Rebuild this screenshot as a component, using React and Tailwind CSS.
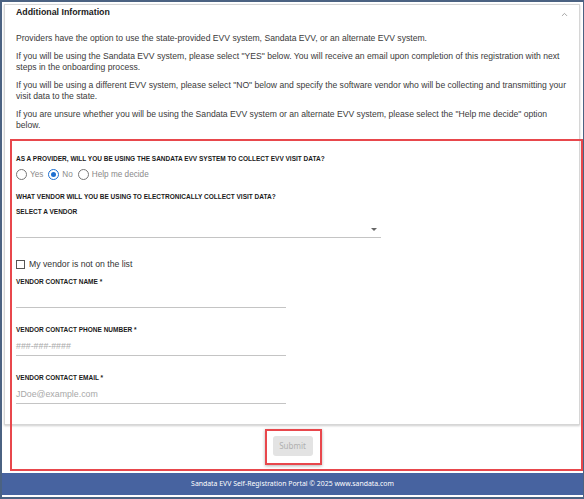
import React from "react";
import { ChevronUp } from "lucide-react";

const font = { fontFamily: '"Liberation Sans", Arial, sans-serif' };

const Label = ({ children, className = "" }) => (
  <p className={`text-[6.5px] font-bold uppercase leading-[10px] text-[#1a1a1a] ${className}`}>
    {children}
  </p>
);

const Radio = ({ label, checked }) => (
  <label className="flex items-center gap-[3px]">
    <span
      className={`flex h-[11px] w-[11px] items-center justify-center rounded-full border ${
        checked ? "border-[#1d6fd1]" : "border-[#777]"
      }`}
    >
      {checked && <span className="h-[5px] w-[5px] rounded-full bg-[#1d6fd1]" />}
    </span>
    <span className="text-[8.2px] leading-[11px] text-[#8a8a8a]">{label}</span>
  </label>
);

const TextField = ({ label, placeholder }) => (
  <div className="w-[270px]">
    <Label>{label}</Label>
    <div className="mt-[5px] flex h-[16px] items-center border-b border-[#c4c4c4] pb-[1px] text-[8.8px] text-[#a8a8a8]">
      {placeholder}
    </div>
  </div>
);

export default function App() {
  return (
    <div
      className="relative flex h-[499px] w-[584px] flex-col overflow-hidden border-t-2 border-l-2 border-r border-b-2 border-[#4b6282] bg-white"
      style={font}
    >
      <div className="ml-[2px] mr-[3px] mt-[2px] flex h-[421px] flex-col border border-[#d6d6d6] bg-white shadow-[0_1px_2px_rgba(0,0,0,0.2)]">
        <div className="flex items-center justify-between pl-[11px] pr-[10px]">
          <h2 className="text-[8.8px] font-bold leading-[13px] text-[#222]">Additional Information</h2>
          <ChevronUp size={9} strokeWidth={2} className="mt-[5px] text-[#888]" />
        </div>

        <div className="mt-[14px] flex flex-col gap-[7px] pl-[11px] pr-[9px] text-[8.6px] leading-[11px] text-[#3a3a3a]">
          <p>Providers have the option to use the state-provided EVV system, Sandata EVV, or an alternate EVV system.</p>
          <p>
            If you will be using the Sandata EVV system, please select "YES" below. You will receive an email upon
            completion of this registration with next steps in the onboarding process.
          </p>
          <p>
            If you will be using a different EVV system, please select "NO" below and specify the software vendor who
            will be collecting and transmitting your visit data to the state.
          </p>
          <p>
            If you are unsure whether you will be using the Sandata EVV system or an alternate EVV system, please select
            the "Help me decide" option below.
          </p>
        </div>

        <div className="mt-[23px] flex flex-col pl-[11px]">
          <Label>As a provider, will you be using the Sandata EVV system to collect EVV visit data?</Label>
          <div className="mt-[4.5px] flex h-[11px] items-center gap-[5px]">
            <Radio label="Yes" />
            <Radio label="No" checked />
            <Radio label="Help me decide" />
          </div>
          <Label className="mt-[12.5px]">What vendor will you be using to electronically collect visit data?</Label>
          <Label className="mt-[4.5px]">Select a vendor</Label>
          <div className="mt-[5.5px] flex h-[16px] w-[365px] items-start justify-end border-b border-[#c4c4c4] pr-[4px]">
            <span className="mt-[6px] h-0 w-0 border-x-[3px] border-t-[3px] border-x-transparent border-t-[#666]" />
          </div>

          <label className="mt-[20.5px] flex h-[11px] items-center gap-[4px]">
            <span className="h-[9px] w-[9px] border border-[#555]" />
            <span className="text-[8.7px] leading-[11px] text-[#333]">My vendor is not on the list</span>
          </label>

          <div className="mt-[7.5px] flex flex-col gap-[17px]">
            <TextField label="Vendor contact name *" placeholder="" />
            <TextField label="Vendor contact phone number *" placeholder="###-###-####" />
            <TextField label="Vendor contact email *" placeholder="JDoe@example.com" />
          </div>
        </div>
      </div>

      <div className="flex flex-1 justify-center pt-[11px]">
        <button
          className="h-[20px] w-[40px] rounded-[3px] bg-[#e3e3e3] text-[8px] text-[#b0b0b0]"
          style={{ fontFamily: '"Noto Sans", sans-serif' }}
        >
          Submit
        </button>
      </div>

      <footer
        className="mb-[2px] flex h-[22px] items-center justify-center bg-[#4763a0] text-[6.9px] text-white"
        style={{ fontFamily: '"Noto Sans", sans-serif' }}
      >
        Sandata EVV Self-Registration Portal © 2025 www.sandata.com
      </footer>

      <div className="pointer-events-none absolute left-[8px] top-[137px] h-[332px] w-[573px] border-2 border-[#e8474c]" />
      <div className="pointer-events-none absolute left-[263px] top-[427px] h-[36px] w-[57px] border-2 border-[#e8474c] shadow-[0_1px_3px_rgba(0,0,0,0.3)]" />
    </div>
  );
}
